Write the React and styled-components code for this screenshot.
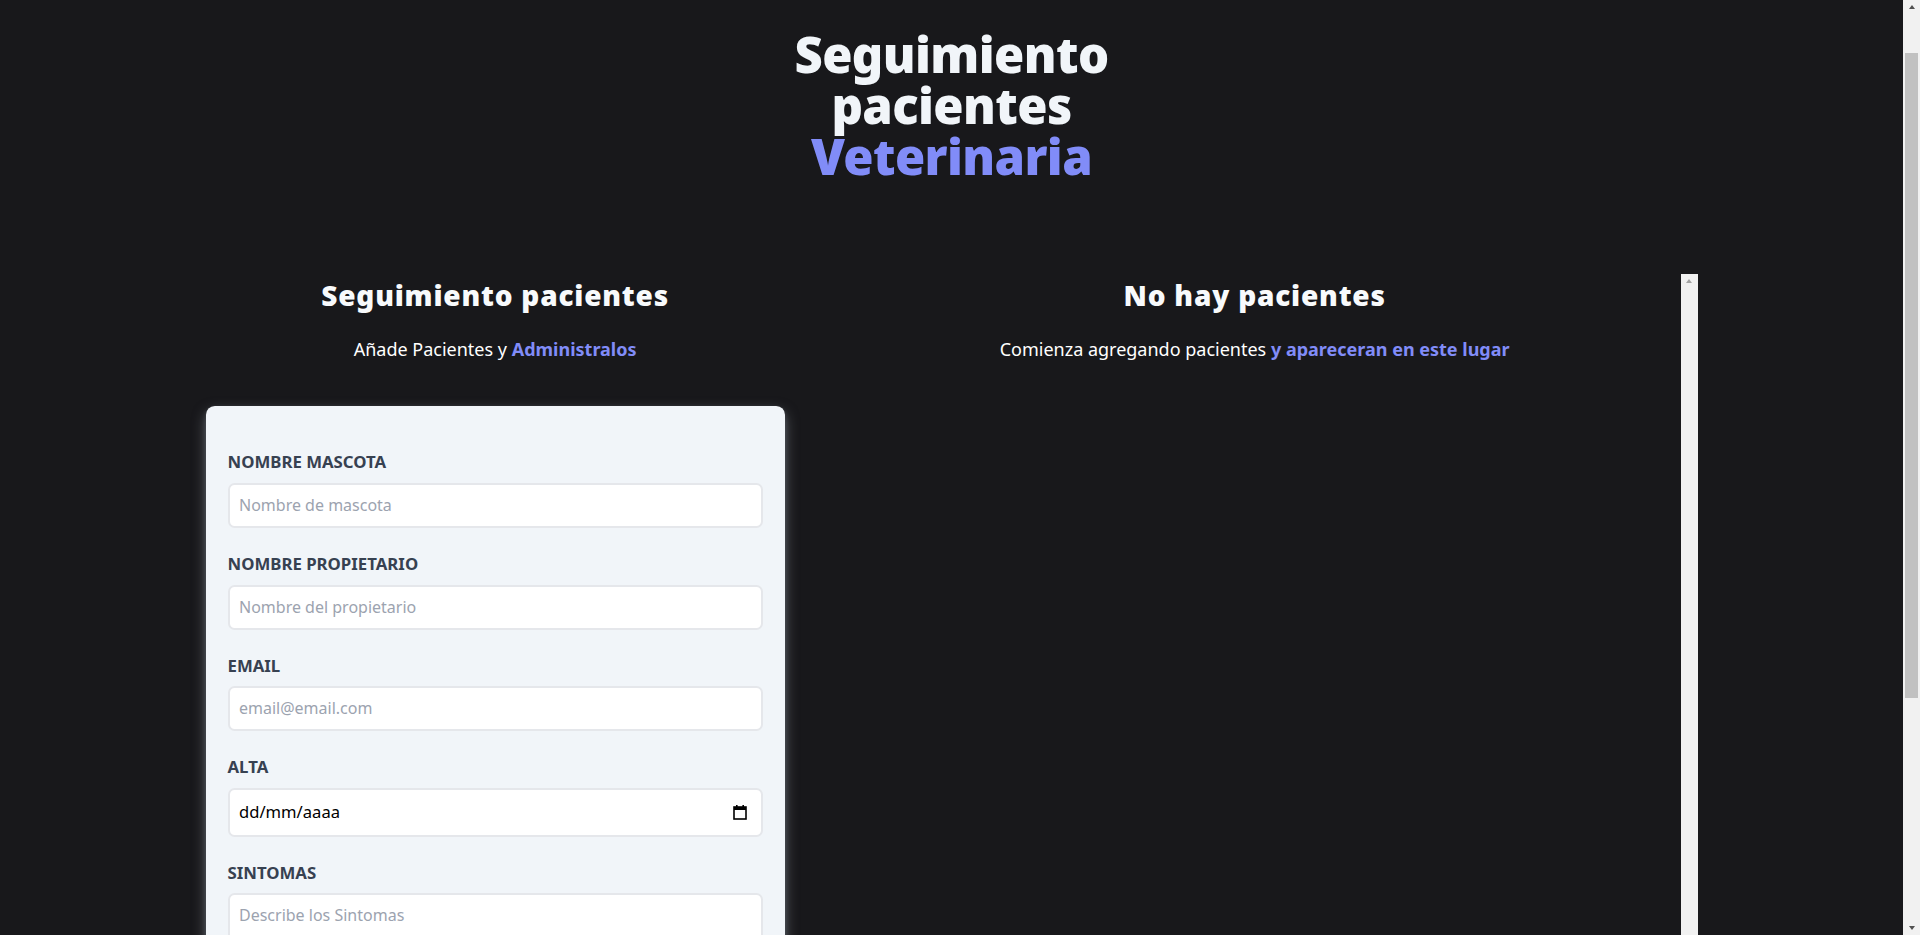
import React from 'react';
import styled, { createGlobalStyle } from 'styled-components';

const GlobalStyle = createGlobalStyle`
  *, *::before, *::after { box-sizing: border-box; }
  html, body { margin: 0; padding: 0; overflow: hidden; }
  body {
    background: #18181b;
    font-family: "Noto Sans", "Open Sans", sans-serif;
    font-size: 17.6px;
    line-height: 1.5;
  }
`;

// window frame: scrolling page + a drawn scrollbar rail on the right
const Frame = styled.div`
  display: flex;
  height: 100vh;
`;

const Viewport = styled.div`
  flex: 1;
  min-width: 0;
  overflow-y: auto;
  scrollbar-width: none;
  &::-webkit-scrollbar { display: none; }
`;

const Rail = styled.div`
  flex: 0 0 17px;
  display: flex;
  flex-direction: column;
  background: #f1f1f1;
  height: ${(p) => (p.$tall ? '100vh' : '100%')};
`;

const RailButton = styled.div`
  flex: 0 0 17px;
  display: flex;
  align-items: center;
  justify-content: center;
  padding-bottom: ${(p) => (p.$down ? '0' : '3px')};
  padding-top: ${(p) => (p.$down ? '3px' : '0')};
`;

const Arrow = styled.span`
  width: 0;
  height: 0;
  border-left: 3.5px solid transparent;
  border-right: 3.5px solid transparent;
  ${(p) => (p.$down ? 'border-top' : 'border-bottom')}: 4px solid ${(p) => p.$color};
`;

const RailTrack = styled.div`
  flex: 1;
  padding: 36px 2px 0;
`;

const Thumb = styled.div`
  height: 645px;
  background: #c1c1c1;
`;

const Header = styled.header`
  padding-top: 29px;
`;

const Title = styled.h1`
  margin: 0 auto;
  max-width: 480px;
  text-align: center;
  color: #f1f5f9;
  font-size: 49px;
  line-height: 51px;
  letter-spacing: -0.6px;
  font-weight: 900;
`;

const Accent = styled.span`
  color: #818cf8;
`;

const Main = styled.main`
  max-width: 1536px;
  margin: 95.7px auto 0;
  display: flex;
`;

const FormColumn = styled.section`
  width: 40%;
  margin: 0 22px;
`;

const ListColumn = styled.section`
  width: 60%;
  margin: 0 22px;
  height: 100vh;
  margin-top: -3.7px;
  display: flex;
`;

const ListBody = styled.div`
  flex: 1;
  min-width: 0;
  padding-top: 3.7px;
`;

const ColumnTitle = styled.h2`
  margin: 0;
  text-align: center;
  color: #f8fafc;
  font-size: 28px;
  line-height: 35.2px;
  letter-spacing: 0.8px;
  font-weight: 900;
`;

const Lead = styled.p`
  margin: 20.7px 0 41.6px;
  text-align: center;
  color: #ffffff;
  font-size: 18px;
  line-height: 30.8px;
`;

const Highlight = styled.span`
  color: #818cf8;
  font-weight: 700;
`;

const Card = styled.form`
  background: #f1f5f9;
  border-radius: 8.8px;
  padding: 43px 22px 44px;
  margin-bottom: 44px;
  box-shadow: 0 6px 14px 0 rgba(156, 163, 175, 0.5), 0 2px 6px -2px rgba(156, 163, 175, 0.45);
`;

const Field = styled.div`
  margin-bottom: 23px;
`;

const Label = styled.label`
  display: block;
  color: #374151;
  text-transform: uppercase;
  font-weight: 700;
  font-size: 16.8px;
  line-height: 26.4px;
`;

const Input = styled.input`
  display: block;
  width: 100%;
  margin-top: 7.4px;
  padding: 9px 9.5px;
  border: 2px solid #e5e7eb;
  border-radius: 6.6px;
  background: #fff;
  font-family: inherit;
  font-size: 16px;
  line-height: 23px;
  color: #111827;
  outline: none;

  &::placeholder { color: #9ca3af; }
`;

const TextArea = styled(Input).attrs({ as: 'textarea' })`
  resize: vertical;
  height: 70px;
`;

const DateBox = styled.div`
  display: flex;
  align-items: center;
  margin-top: 7.4px;
  padding: 9px 14px 9px 9.5px;
  border: 2px solid #e5e7eb;
  border-radius: 6.6px;
  background: #fff;
`;

const DateText = styled.input`
  flex: 1;
  min-width: 0;
  border: 0;
  padding: 0;
  font-family: inherit;
  font-size: 16.6px;
  line-height: 26.4px;
  background: transparent;
  outline: none;

  &::placeholder { color: #000; }
`;

const Submit = styled.button`
  width: 100%;
  padding: 13.2px;
  border: 0;
  background: #4f46e5;
  color: #fff;
  text-transform: uppercase;
  font-family: inherit;
  font-weight: 700;
  font-size: 17.6px;
  line-height: 26.4px;
  cursor: pointer;
`;

const CalendarIcon = () => (
  <svg width="14" height="16" viewBox="0 0 14 16" aria-hidden="true">
    <rect x="1" y="3" width="12" height="12" fill="none" stroke="#000" strokeWidth="1.6" />
    <rect x="1" y="3" width="12" height="3" fill="#000" />
    <rect x="3" y="1" width="1.6" height="3" fill="#000" />
    <rect x="9.4" y="1" width="1.6" height="3" fill="#000" />
  </svg>
);

export default function App() {
  return (
    <>
      <GlobalStyle />
      <Frame>
        <Viewport>
          <Header>
            <Title>
              Seguimiento pacientes <Accent>Veterinaria</Accent>
            </Title>
          </Header>
          <Main>
            <FormColumn>
              <ColumnTitle>Seguimiento pacientes</ColumnTitle>
              <Lead>
                Añade Pacientes y <Highlight>Administralos</Highlight>
              </Lead>
              <Card onSubmit={(e) => e.preventDefault()}>
                <Field>
                  <Label htmlFor="mascota">Nombre Mascota</Label>
                  <Input id="mascota" type="text" placeholder="Nombre de mascota" />
                </Field>
                <Field>
                  <Label htmlFor="propietario">Nombre Propietario</Label>
                  <Input id="propietario" type="text" placeholder="Nombre del propietario" />
                </Field>
                <Field>
                  <Label htmlFor="email">Email</Label>
                  <Input id="email" type="email" placeholder="email@email.com" />
                </Field>
                <Field>
                  <Label htmlFor="alta">Alta</Label>
                  <DateBox>
                    <DateText id="alta" type="text" placeholder="dd/mm/aaaa" />
                    <CalendarIcon />
                  </DateBox>
                </Field>
                <Field>
                  <Label htmlFor="sintomas">Sintomas</Label>
                  <TextArea id="sintomas" placeholder="Describe los Sintomas" />
                </Field>
                <Submit type="submit">Agregar Paciente</Submit>
              </Card>
            </FormColumn>
            <ListColumn>
              <ListBody>
                <ColumnTitle>No hay pacientes</ColumnTitle>
                <Lead>
                  Comienza agregando pacientes <Highlight>y apareceran en este lugar</Highlight>
                </Lead>
              </ListBody>
              <Rail $tall>
                <RailButton><Arrow $color="#a3a3a3" /></RailButton>
                <RailTrack />
                <RailButton $down><Arrow $down $color="#a3a3a3" /></RailButton>
              </Rail>
            </ListColumn>
          </Main>
        </Viewport>
        <Rail>
          <RailButton><Arrow $color="#505050" /></RailButton>
          <RailTrack>
            <Thumb />
          </RailTrack>
          <RailButton $down><Arrow $down $color="#505050" /></RailButton>
        </Rail>
      </Frame>
    </>
  );
}
